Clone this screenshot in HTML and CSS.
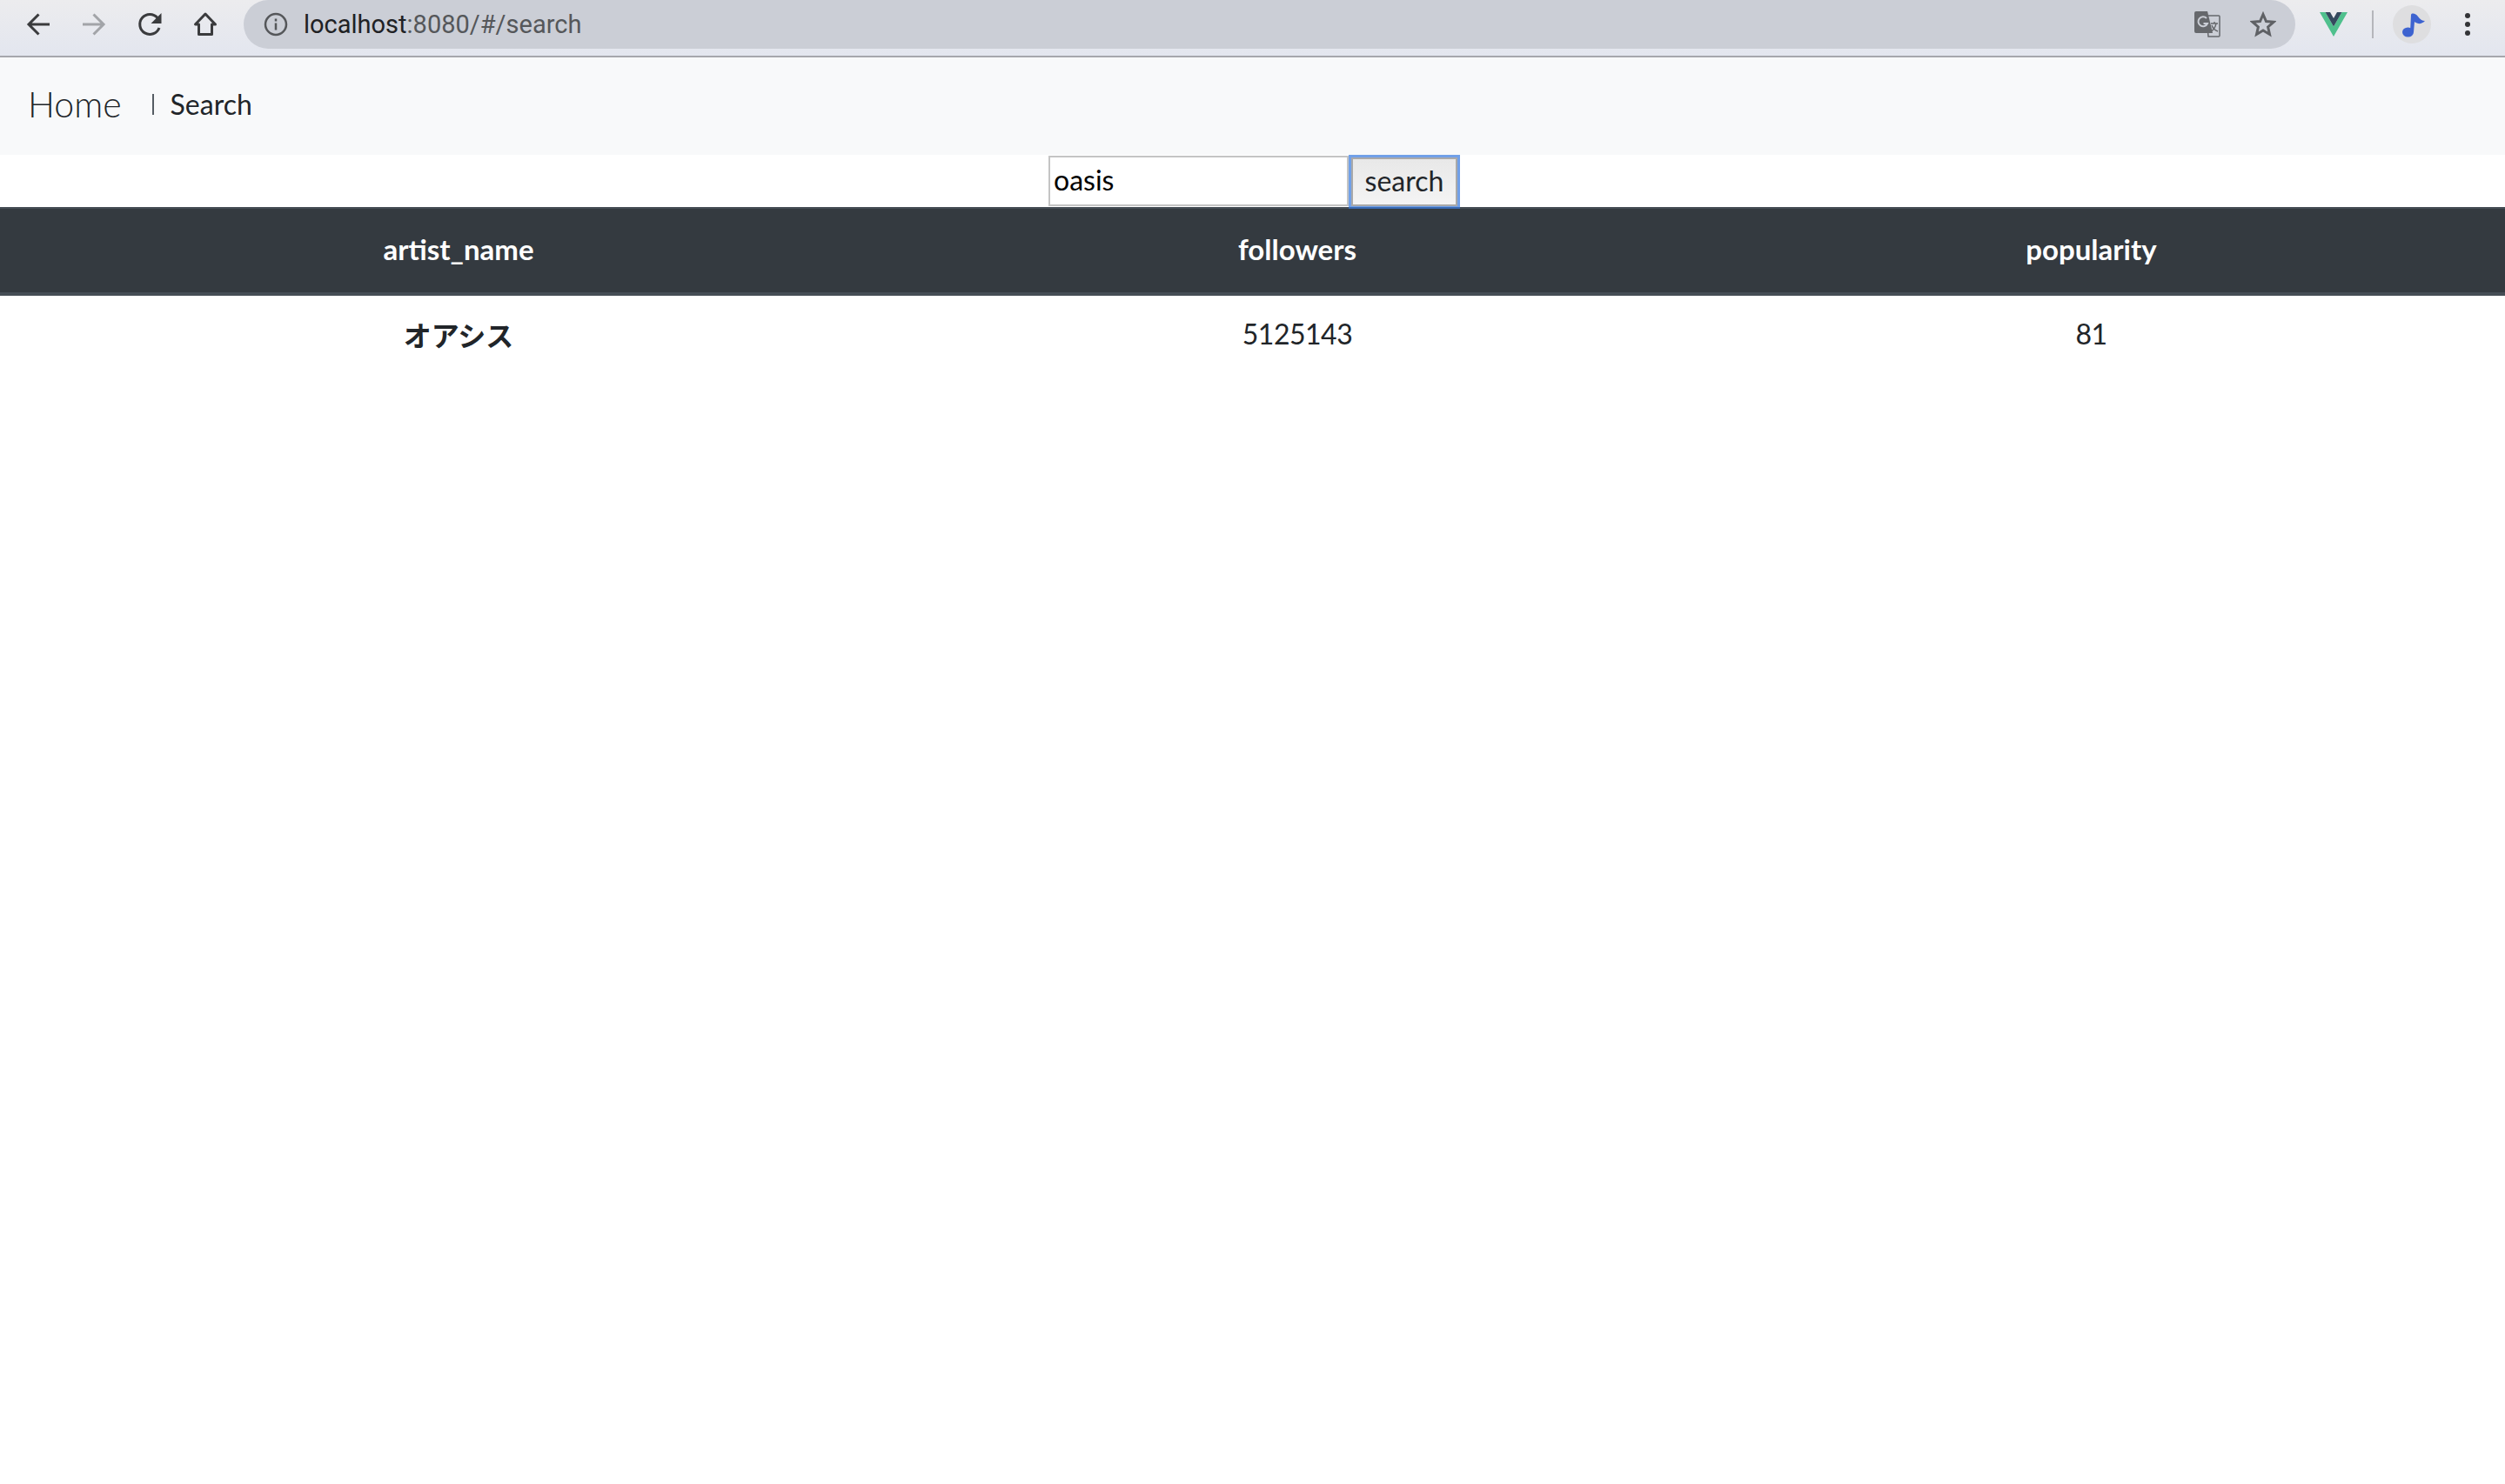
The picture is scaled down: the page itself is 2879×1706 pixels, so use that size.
FILE: index.html
```html
<!DOCTYPE html>
<html lang="ja">
<head>
  <meta charset="UTF-8">
  <meta name="viewport" content="width=device-width, initial-scale=1.0">
  <title>Search</title>
  <link rel="stylesheet" href="styles.css">
</head>
<body>
  <div class="toolbar">
    <div class="nav-icons">
      <svg class="tool-icon" viewBox="0 0 32 32"><path d="M29 16H5M16.500 4.500 5 16 16.500 27.500" fill="none" stroke="#3a3b3d" stroke-width="3"/></svg>
      <svg class="tool-icon" viewBox="0 0 32 32"><path d="M3 16H27M15.500 4.500 27 16 15.500 27.500" fill="none" stroke="#a2a4a8" stroke-width="3"/></svg>
      <svg class="tool-icon" viewBox="0 0 32 32"><path d="M27 20A11.500 11.500 0 1 1 25 8.500" fill="none" stroke="#3a3b3d" stroke-width="3"/><path d="M29.500 3V15H17.500Z" fill="#3a3b3d"/></svg>
      <svg class="tool-icon" viewBox="0 0 32 32"><path d="M16 4 4.500 16H8.500V27.500H23.500V16H27.500Z" fill="none" stroke="#3a3b3d" stroke-width="3" stroke-linejoin="round"/></svg>
    </div>
    <div class="omnibox">
      <svg class="info-icon" viewBox="0 0 28 28"><circle cx="14" cy="14" r="12" fill="none" stroke="#55575a" stroke-width="2.500"/><path d="M14 12.500V20.500M14 7.500V10.500" stroke="#55575a" stroke-width="2.500"/></svg>
      <span class="url"><span class="url-host">localhost</span>:8080/#/search</span>
      <svg class="translate-icon" viewBox="0 0 30 30">
        <path d="M14 5H28A1 1 0 0 1 29 6V28A1 1 0 0 1 28 29H16Z" fill="#cbced6" stroke="#66686c" stroke-width="1.500"/>
        <path d="M2 0H15L21 25H2A2 2 0 0 1 0 23V2A2 2 0 0 1 2 0Z" fill="#66686c"/>
        <path d="M14 8A5.500 5.500 0 1 0 15 14H10.500" fill="none" stroke="#cbced6" stroke-width="2"/>
        <path d="M19 14H27M23 12V14M25 14C24 19 21 22 19 23M20 16C21 19 24 22 27 23" fill="none" stroke="#66686c" stroke-width="1.400"/>
      </svg>
      <svg class="star-icon" viewBox="0 0 30 30"><path d="M15 3.500 18.500 11.500 27 12.300 20.600 18 22.500 26.500 15 22 7.500 26.500 9.400 18 3 12.300 11.500 11.500Z" fill="none" stroke="#5f6165" stroke-width="3"/></svg>
    </div>
    <div class="ext-icons">
      <svg class="vue-icon" viewBox="0 0 32 28"><path d="M0 0H6.500L16 16.500 25.500 0H32L16 28Z" fill="#4fc08d"/><path d="M6.500 0H12L16 7 20 0H25.500L16 16.500Z" fill="#35495e"/></svg>
      <div class="ext-sep"></div>
      <div class="avatar">
        <svg viewBox="0 0 44 44"><ellipse cx="17.500" cy="31" rx="6.500" ry="5.500" fill="#3d63d0"/><path d="M20 31 21 11C22 8 27 10 29 13 31 16 34 18 37 18 33 22 29 22 25 19L24 31Z" fill="#3d63d0"/></svg>
      </div>
      <div class="menu-dots"><span></span><span></span><span></span></div>
    </div>
  </div>

  <nav class="navbar">
    <a class="brand">Home</a>
    <span class="nav-sep"></span>
    <a class="nav-link">Search</a>
  </nav>

  <form class="search-form">
    <input class="search-input" type="text" value="oasis">
    <button class="search-button" type="button">search</button>
  </form>

  <table class="results">
    <colgroup>
      <col class="col-name">
      <col class="col-followers">
      <col class="col-popularity">
    </colgroup>
    <thead>
      <tr>
        <th>artist_name</th>
        <th>followers</th>
        <th>popularity</th>
      </tr>
    </thead>
    <tbody>
      <tr>
        <th>オアシス</th>
        <td>5125143</td>
        <td>81</td>
      </tr>
    </tbody>
  </table>
</body>
</html>
```

FILE: styles.css
```css
* {
  box-sizing: border-box;
}

body {
  margin: 0;
  background: #fff;
  color: #212529;
  font-family: 'Lato', 'Noto Sans CJK JP', sans-serif;
  font-size: 32px;
}

.toolbar {
  display: flex;
  align-items: flex-start;
  height: 66px;
  background-image: linear-gradient(#ececee, #e3e6ef);
  border-bottom: 2px solid #a6a7ad;
}

.nav-icons {
  display: flex;
  gap: 32px;
  padding: 12px 0 0 28px;
  width: 280px;
}

.tool-icon {
  width: 32px;
  height: 32px;
}

.omnibox {
  display: flex;
  align-items: center;
  width: 2358px;
  height: 56px;
  background: #cbced6;
  border-radius: 28px;
  padding: 0 22px 0 23px;
}

.info-icon {
  width: 28px;
  height: 28px;
  margin-right: 18px;
}

.url {
  flex: 1;
  font-family: 'Roboto', sans-serif;
  font-size: 29px;
  color: #55575a;
}

.url-host {
  color: #202124;
}

.translate-icon {
  width: 30px;
  height: 30px;
  margin-right: 34px;
}

.star-icon {
  width: 30px;
  height: 30px;
}

.ext-icons {
  display: flex;
  align-items: center;
  flex: 1;
  height: 56px;
  padding-left: 28px;
}

.vue-icon {
  width: 32px;
  height: 28px;
}

.ext-sep {
  width: 2px;
  height: 32px;
  margin: 0 22px 0 28px;
  background: #b5b6bb;
}

.avatar {
  display: flex;
  width: 44px;
  height: 44px;
  border-radius: 50%;
  background: #dedee0;
}

.menu-dots {
  display: flex;
  flex-direction: column;
  gap: 4px;
  margin-left: 39px;
}

.menu-dots span {
  width: 6px;
  height: 6px;
  border-radius: 50%;
  background: #333437;
}

.navbar {
  display: flex;
  align-items: center;
  height: 112px;
  background: #f8f9fa;
  padding: 0 32px 5px;
}

.brand {
  font-size: 41px;
  font-weight: 300;
  color: #212529;
}

.nav-sep {
  width: 2px;
  height: 24px;
  margin: 0 19px 0 35px;
  background: #555c63;
}

.nav-link {
  color: #212529;
}

.search-form {
  display: flex;
  justify-content: center;
  align-items: flex-start;
  height: 60px;
  padding: 1px 0 0 1px;
}

.search-input {
  width: 345px;
  height: 58px;
  border: 2px solid #c4c4c4;
  padding: 0 4px 3px;
  font-family: inherit;
  font-size: 32px;
  color: #000;
  background: #fff;
  outline: none;
}

.search-button {
  width: 122px;
  height: 56px;
  margin: 2px 0 0 3px;
  border: 2px solid #a9a9a9;
  outline: 3px solid rgba(52, 120, 222, 0.7);
  background-image: linear-gradient(#e8e8e8, #f4f4f4);
  font-family: inherit;
  font-size: 32px;
  color: #212529;
  padding: 0 0 3px;
  position: relative;
  z-index: 1;
}

.results {
  width: 100%;
  border-collapse: separate;
  border-spacing: 0;
  table-layout: fixed;
}

.col-name {
  width: 1054px;
}

.col-followers {
  width: 874px;
}

.results thead th {
  height: 102px;
  padding: 0 0 4px;
  background: #343a40;
  color: #fff;
  font-size: 33px;
  font-weight: 700;
  border-top: 2px solid #454d55;
  border-bottom: 4px solid #454d55;
}

.results tbody th,
.results tbody td {
  height: 96px;
  padding: 0 0 9px;
  text-align: center;
  font-weight: 400;
}

.results tbody td {
  letter-spacing: -0.5px;
}

.results tbody th {
  font-weight: 700;
}
```
